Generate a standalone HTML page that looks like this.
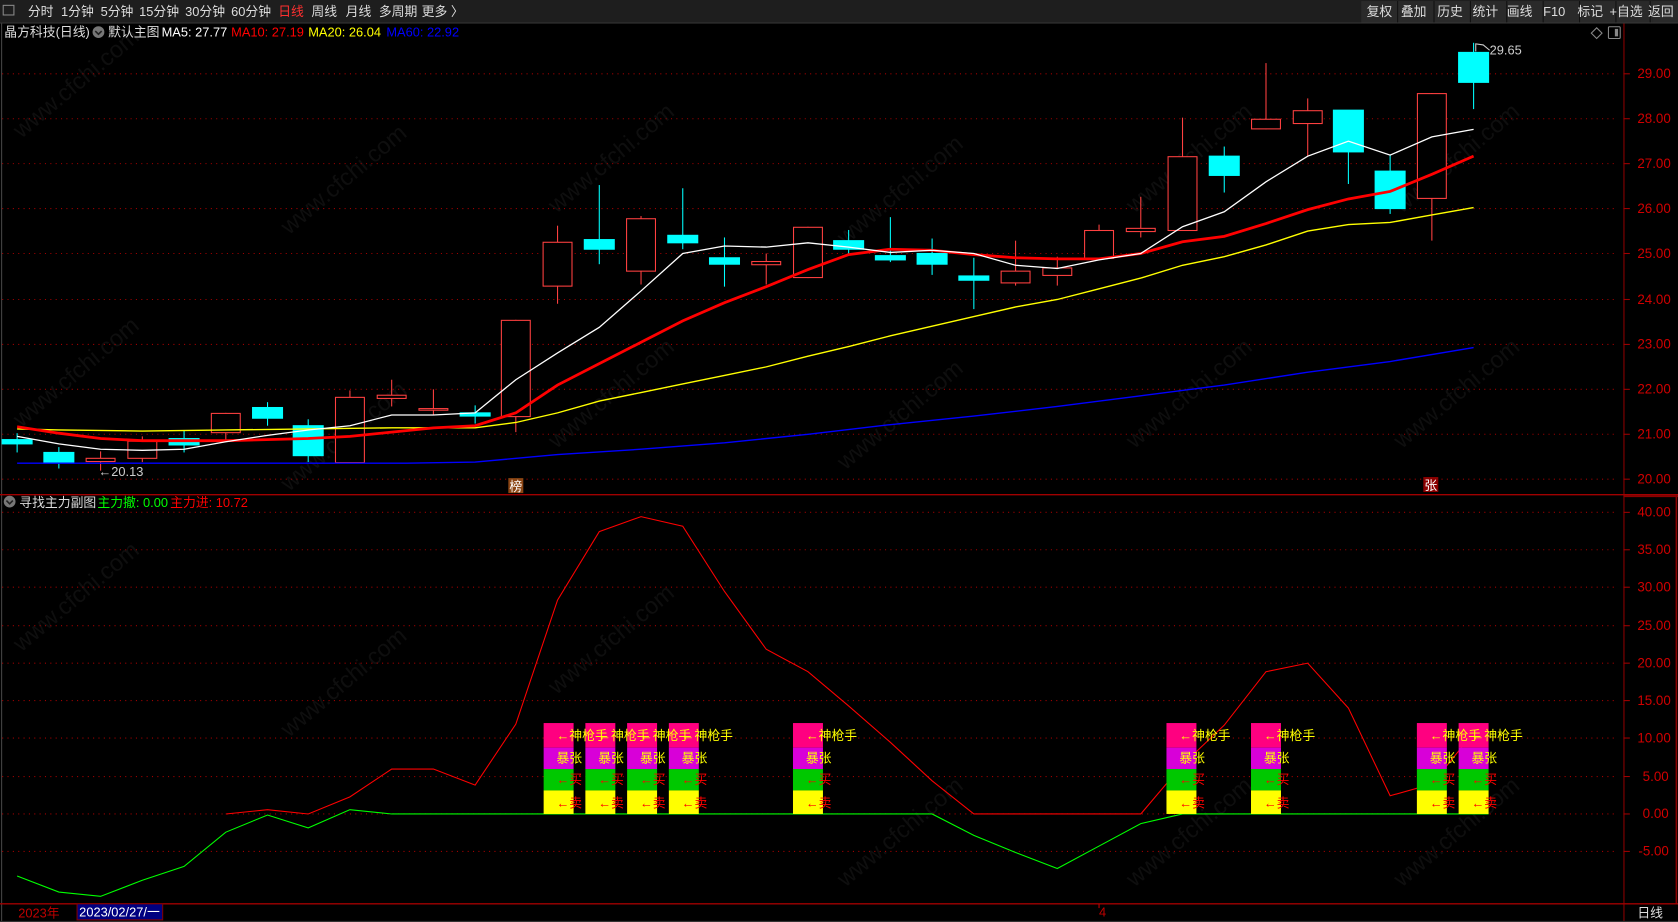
<!DOCTYPE html>
<html><head><meta charset="utf-8"><style>
html,body{margin:0;padding:0;background:#000;width:1678px;height:922px;overflow:hidden}
svg{display:block}
text{font-family:"Liberation Sans","Noto Sans CJK SC",sans-serif}
</style></head><body>
<svg width="1678" height="922" viewBox="0 0 1568 862" preserveAspectRatio="none" xmlns="http://www.w3.org/2000/svg">
<rect width="1568" height="862" fill="#000"/>
<rect x="0" y="0" width="1568" height="21" fill="#1e1e1e"/>
<line x1="0" y1="21.5" x2="1568" y2="21.5" stroke="#3a3a3a"/>
<rect x="3" y="5" width="10" height="9" fill="none" stroke="#888"/>
<g font-size="12" fill="#ddd">
<text x="26" y="15">分时</text><text x="57" y="15">1分钟</text><text x="94" y="15">5分钟</text><text x="130" y="15">15分钟</text><text x="173" y="15">30分钟</text><text x="216" y="15">60分钟</text>
<text x="260" y="15" fill="#ff3030">日线</text><text x="291" y="15">周线</text><text x="323" y="15">月线</text><text x="354" y="15">多周期</text><text x="394" y="15">更多 〉</text>
</g>
<g fill="#2a2a2a"><rect x="1272" y="1" width="34" height="20"/><rect x="1306" y="1" width="34" height="20"/><rect x="1340" y="1" width="34" height="20"/><rect x="1374" y="1" width="34" height="20"/><rect x="1408" y="1" width="34" height="20"/><rect x="1442" y="1" width="34" height="20"/><rect x="1476" y="1" width="34" height="20"/><rect x="1510" y="1" width="34" height="20"/><rect x="1544" y="1" width="24" height="20"/></g>
<g stroke="#111"><line x1="1306" y1="1" x2="1306" y2="21"/><line x1="1340" y1="1" x2="1340" y2="21"/><line x1="1374" y1="1" x2="1374" y2="21"/><line x1="1408" y1="1" x2="1408" y2="21"/><line x1="1442" y1="1" x2="1442" y2="21"/><line x1="1476" y1="1" x2="1476" y2="21"/><line x1="1510" y1="1" x2="1510" y2="21"/><line x1="1542" y1="1" x2="1542" y2="21"/></g>
<g font-size="12" fill="#ddd"><text x="1277" y="15">复权</text><text x="1309" y="15">叠加</text><text x="1343" y="15">历史</text><text x="1376" y="15">统计</text><text x="1408" y="15">画线</text><text x="1442" y="15">F10</text><text x="1474" y="15">标记</text><text x="1504" y="15">+自选</text><text x="1540" y="15">返回</text></g>

<g font-size="22" fill="#333" opacity="0.28">
<text transform="translate(20,130) rotate(-40)">www.cfchi.com</text>
<text transform="translate(270,220) rotate(-40)">www.cfchi.com</text>
<text transform="translate(520,200) rotate(-40)">www.cfchi.com</text>
<text transform="translate(790,230) rotate(-40)">www.cfchi.com</text>
<text transform="translate(1060,200) rotate(-40)">www.cfchi.com</text>
<text transform="translate(1310,200) rotate(-40)">www.cfchi.com</text>
<text transform="translate(20,400) rotate(-40)">www.cfchi.com</text>
<text transform="translate(270,460) rotate(-40)">www.cfchi.com</text>
<text transform="translate(520,420) rotate(-40)">www.cfchi.com</text>
<text transform="translate(790,440) rotate(-40)">www.cfchi.com</text>
<text transform="translate(1060,420) rotate(-40)">www.cfchi.com</text>
<text transform="translate(1310,420) rotate(-40)">www.cfchi.com</text>
<text transform="translate(20,610) rotate(-40)">www.cfchi.com</text>
<text transform="translate(270,690) rotate(-40)">www.cfchi.com</text>
<text transform="translate(520,650) rotate(-40)">www.cfchi.com</text>
<text transform="translate(790,830) rotate(-40)">www.cfchi.com</text>
<text transform="translate(1060,830) rotate(-40)">www.cfchi.com</text>
<text transform="translate(1310,830) rotate(-40)">www.cfchi.com</text>
</g>

<line x1="1.5" y1="22" x2="1.5" y2="862" stroke="#444"/>
<line x1="1517.5" y1="22" x2="1517.5" y2="862" stroke="#8b0000"/>
<line x1="1566.5" y1="463" x2="1566.5" y2="845" stroke="#8b0000" stroke-width="1.5"/>
<line x1="0" y1="462.5" x2="1568" y2="462.5" stroke="#a00000" stroke-width="1.3"/>
<line x1="0" y1="845" x2="1568" y2="845" stroke="#a00000" stroke-width="1.3"/>
<line x1="1517" y1="464" x2="1568" y2="464" stroke="#8b0000" stroke-width="1.5"/>

<g stroke="#a00000" stroke-dasharray="1 4">
<line x1="2" y1="69" x2="1510" y2="69"/><line x1="2" y1="111" x2="1510" y2="111"/><line x1="2" y1="153" x2="1510" y2="153"/><line x1="2" y1="195" x2="1510" y2="195"/><line x1="2" y1="237" x2="1510" y2="237"/><line x1="2" y1="280" x2="1510" y2="280"/><line x1="2" y1="322" x2="1510" y2="322"/><line x1="2" y1="364" x2="1510" y2="364"/><line x1="2" y1="406" x2="1510" y2="406"/><line x1="2" y1="448" x2="1510" y2="448"/>
<line x1="2" y1="479" x2="1510" y2="479"/><line x1="2" y1="514" x2="1510" y2="514"/><line x1="2" y1="549" x2="1510" y2="549"/><line x1="2" y1="585" x2="1510" y2="585"/><line x1="2" y1="620" x2="1510" y2="620"/><line x1="2" y1="655" x2="1510" y2="655"/><line x1="2" y1="690" x2="1510" y2="690"/><line x1="2" y1="726" x2="1510" y2="726"/><line x1="2" y1="761" x2="1510" y2="761"/><line x1="2" y1="796" x2="1510" y2="796"/>
</g>
<g font-size="12.5" fill="#d00000">
<text x="1530" y="73">29.00</text><text x="1530" y="115">28.00</text><text x="1530" y="157">27.00</text><text x="1530" y="199">26.00</text><text x="1530" y="241">25.00</text><text x="1530" y="284">24.00</text><text x="1530" y="326">23.00</text><text x="1530" y="368">22.00</text><text x="1530" y="410">21.00</text><text x="1530" y="452">20.00</text>
<text x="1530" y="483">40.00</text><text x="1530" y="518">35.00</text><text x="1530" y="553">30.00</text><text x="1530" y="589">25.00</text><text x="1530" y="624">20.00</text><text x="1530" y="659">15.00</text><text x="1530" y="694">10.00</text><text x="1535" y="730">5.00</text><text x="1535" y="765">0.00</text><text x="1531" y="800">-5.00</text>
</g>
<g stroke="#a00000"><line x1="1517" y1="69" x2="1523" y2="69"/><line x1="1517" y1="111" x2="1523" y2="111"/><line x1="1517" y1="153" x2="1523" y2="153"/><line x1="1517" y1="195" x2="1523" y2="195"/><line x1="1517" y1="237" x2="1523" y2="237"/><line x1="1517" y1="280" x2="1523" y2="280"/><line x1="1517" y1="322" x2="1523" y2="322"/><line x1="1517" y1="364" x2="1523" y2="364"/><line x1="1517" y1="406" x2="1523" y2="406"/><line x1="1517" y1="448" x2="1523" y2="448"/>
<line x1="1517" y1="479" x2="1523" y2="479"/><line x1="1517" y1="514" x2="1523" y2="514"/><line x1="1517" y1="549" x2="1523" y2="549"/><line x1="1517" y1="585" x2="1523" y2="585"/><line x1="1517" y1="620" x2="1523" y2="620"/><line x1="1517" y1="655" x2="1523" y2="655"/><line x1="1517" y1="690" x2="1523" y2="690"/><line x1="1517" y1="726" x2="1523" y2="726"/><line x1="1517" y1="761" x2="1523" y2="761"/><line x1="1517" y1="796" x2="1523" y2="796"/></g>

<g font-size="12">
<text x="4" y="34" fill="#ddd">晶方科技(日线)</text>
<circle cx="92" cy="30" r="5.5" fill="#777"/><path d="M89 29 L92 32 L95 29" stroke="#222" stroke-width="1.5" fill="none"/>
<text x="101" y="34" fill="#ddd">默认主图</text>
<text x="151" y="34" fill="#fff">MA5: 27.77</text>
<text x="216" y="34" fill="#ff0000">MA10: 27.19</text>
<text x="288" y="34" fill="#ffff00">MA20: 26.04</text>
<text x="361" y="34" fill="#0000ff">MA60: 22.92</text>
</g>
<path d="M1492 26 L1497 31 L1492 36 L1487 31 Z" fill="none" stroke="#888"/>
<rect x="1503" y="25" width="11" height="11" rx="1" fill="none" stroke="#888"/><rect x="1509" y="27" width="3" height="7" fill="#888"/>

<g stroke="#00ffff" fill="#00ffff">
<line x1="16" y1="405" x2="16" y2="423"/><rect x="2" y="411" width="28" height="4"/>
<line x1="55" y1="418" x2="55" y2="438"/><rect x="41" y="423" width="28" height="10"/>
<line x1="172" y1="402" x2="172" y2="423"/><rect x="158" y="410" width="28" height="6"/>
<line x1="250" y1="376" x2="250" y2="398"/><rect x="236" y="381" width="28" height="10"/>
<line x1="288" y1="392" x2="288" y2="432"/><rect x="274" y="398" width="28" height="28"/>
<line x1="444" y1="379" x2="444" y2="396"/><rect x="430" y="386" width="28" height="3"/>
<line x1="560" y1="173" x2="560" y2="247"/><rect x="546" y="224" width="28" height="9"/>
<line x1="638" y1="176" x2="638" y2="233"/><rect x="624" y="220" width="28" height="7"/>
<line x1="677" y1="222" x2="677" y2="268"/><rect x="663" y="241" width="28" height="6"/>
<line x1="793" y1="215" x2="793" y2="237"/><rect x="779" y="225" width="28" height="8"/>
<line x1="832" y1="203" x2="832" y2="245"/><rect x="818" y="239" width="28" height="4"/>
<line x1="871" y1="223" x2="871" y2="257"/><rect x="857" y="237" width="28" height="10"/>
<line x1="910" y1="241" x2="910" y2="289"/><rect x="896" y="258" width="28" height="4"/>
<line x1="1144" y1="137" x2="1144" y2="180"/><rect x="1130" y="146" width="28" height="18"/>
<line x1="1260" y1="103" x2="1260" y2="172"/><rect x="1246" y="103" width="28" height="39"/>
<line x1="1299" y1="145" x2="1299" y2="200"/><rect x="1285" y="160" width="28" height="35"/>
<line x1="1377" y1="40" x2="1377" y2="102"/><rect x="1363" y="49" width="28" height="28"/>
</g>
<g stroke="#ff4040" fill="none">
<line x1="94" y1="422" x2="94" y2="440"/><rect x="80.5" y="428.5" width="27" height="3" fill="#000"/>
<line x1="133" y1="408" x2="133" y2="432"/><rect x="119.5" y="412.5" width="27" height="16" fill="#000"/>
<line x1="211" y1="386" x2="211" y2="413"/><rect x="197.5" y="386.5" width="27" height="18" fill="#000"/>
<line x1="366" y1="355" x2="366" y2="380"/><rect x="352.5" y="369.5" width="27" height="3" fill="#000"/>
<line x1="405" y1="364" x2="405" y2="388"/><rect x="391.5" y="382" width="27" height="1.5" fill="#000"/>
<line x1="482" y1="299" x2="482" y2="404"/><rect x="468.5" y="299.5" width="27" height="90" fill="#000"/>
<line x1="521" y1="211" x2="521" y2="284"/><rect x="507.5" y="226.5" width="27" height="41" fill="#000"/>
<line x1="599" y1="202" x2="599" y2="266"/><rect x="585.5" y="204.5" width="27" height="49" fill="#000"/>
<line x1="716" y1="237" x2="716" y2="266"/><rect x="702.5" y="244.5" width="27" height="3" fill="#000"/>
<line x1="755" y1="212" x2="755" y2="260"/><rect x="741.5" y="212.5" width="27" height="47" fill="#000"/>
<line x1="949" y1="225" x2="949" y2="267"/><rect x="935.5" y="253.5" width="27" height="11" fill="#000"/>
<line x1="988" y1="240" x2="988" y2="267"/><rect x="974.5" y="250.5" width="27" height="7" fill="#000"/>
<line x1="1027" y1="210" x2="1027" y2="241"/><rect x="1013.5" y="215.5" width="27" height="26" fill="#000"/>
<line x1="1066" y1="184" x2="1066" y2="222"/><rect x="1052.5" y="213.5" width="27" height="3" fill="#000"/>
<line x1="1105" y1="110" x2="1105" y2="215"/><rect x="1091.5" y="146.5" width="27" height="69" fill="#000"/>
<line x1="1183" y1="59" x2="1183" y2="121"/><rect x="1169.5" y="111.5" width="27" height="9" fill="#000"/>
<line x1="1222" y1="92" x2="1222" y2="146"/><rect x="1208.5" y="103.5" width="27" height="12" fill="#000"/>
<line x1="1338" y1="87" x2="1338" y2="225"/><rect x="1324.5" y="87.5" width="27" height="98" fill="#000"/>
<line x1="327" y1="365" x2="327" y2="432"/><rect x="313.5" y="371.5" width="27" height="61" fill="#000"/>
</g>
<polyline fill="none" stroke="#0000ff" stroke-width="1.3" points="16,433 200,433 380,433 444,432 521,425 599,420 677,414 755,406 832,397 910,389 988,380 1066,370 1144,360 1222,348 1299,338 1377,325"/>
<polyline fill="none" stroke="#ffff00" stroke-width="1.3" points="16,401 55,402 133,403 211,402 288,401 366,400 444,400 482,395 521,386 560,375 599,367 638,359 677,351 716,343 755,333 793,324 832,314 871,305 910,296 949,287 988,280 1027,270 1066,260 1105,248 1144,240 1183,229 1222,216 1260,210 1299,208 1338,201 1377,194"/>
<polyline fill="none" stroke="#ff0000" stroke-width="2.6" points="16,399 55,405 94,410 133,412 211,412 288,410 327,408 366,404 405,400 444,398 482,386 521,360 560,340 599,320 638,300 677,283 716,268 755,252 793,238 832,233 871,234 910,238 949,241 988,242 1027,242 1066,237 1105,226 1144,221 1183,209 1222,196 1260,186 1299,179 1338,163 1377,146"/>
<polyline fill="none" stroke="#ffffff" stroke-width="1.2" points="16,408 55,415 94,420 133,421 172,420 211,413 250,407 288,402 327,398 366,388 405,388 444,386 482,355 521,330 560,306 599,272 638,237 677,230 716,231 755,227 793,231 832,236 871,234 910,237 949,248 988,251 1027,243 1066,237 1105,212 1144,198 1183,170 1222,146 1260,132 1299,145 1338,128 1377,121"/>
<text x="92" y="445" font-size="12" fill="#ccc">←20.13</text>
<path d="M1379 48 L1379 41 L1386 42 L1392 47" stroke="#ccc" fill="none"/>
<text x="1392" y="51" font-size="12" fill="#ccc">29.65</text>
<rect x="475" y="447" width="14" height="14" fill="#8b4513"/><text x="476" y="459" font-size="12" fill="#fff">榜</text>
<rect x="1330" y="446" width="14" height="14" fill="#8b0000"/><text x="1331" y="458" font-size="12" fill="#fff">张</text>

<circle cx="9" cy="469" r="5.5" fill="#777"/><path d="M6 468 L9 471 L12 468" stroke="#222" stroke-width="1.5" fill="none"/>
<g font-size="12"><text x="18" y="474" fill="#ddd">寻找主力副图</text><text x="91" y="474" fill="#00ff00">主力撤: 0.00</text><text x="159" y="474" fill="#ff0000">主力进: 10.72</text></g>

<polyline fill="none" stroke="#ff0000" stroke-width="1" points="211,761 250,757 288,761 327,745 366,719 405,719 444,734 482,677 521,561 560,497 599,483 638,492 677,553 716,607 755,628 793,660 832,694 871,730 910,761 1066,761 1105,715 1144,678 1183,628 1222,620 1260,662 1299,744 1338,733 1377,685"/>
<polyline fill="none" stroke="#00ff00" stroke-width="1" points="16,819 55,834 94,838 133,823 172,810 211,778 250,762 288,774 327,757 366,761 871,761 910,781 949,797 988,812 1027,791 1066,770 1105,761 1391,761"/>

<g>
<g transform="translate(508,0)"><rect y="676" width="28" height="23" fill="#ff0080"/><rect y="699" width="28" height="20" fill="#d800d8"/><rect y="719" width="28" height="20" fill="#00c800"/><rect y="739" width="28" height="22" fill="#ffff00"/></g>
<g transform="translate(547,0)"><rect y="676" width="28" height="23" fill="#ff0080"/><rect y="699" width="28" height="20" fill="#d800d8"/><rect y="719" width="28" height="20" fill="#00c800"/><rect y="739" width="28" height="22" fill="#ffff00"/></g>
<g transform="translate(586,0)"><rect y="676" width="28" height="23" fill="#ff0080"/><rect y="699" width="28" height="20" fill="#d800d8"/><rect y="719" width="28" height="20" fill="#00c800"/><rect y="739" width="28" height="22" fill="#ffff00"/></g>
<g transform="translate(625,0)"><rect y="676" width="28" height="23" fill="#ff0080"/><rect y="699" width="28" height="20" fill="#d800d8"/><rect y="719" width="28" height="20" fill="#00c800"/><rect y="739" width="28" height="22" fill="#ffff00"/></g>
<g transform="translate(741,0)"><rect y="676" width="28" height="23" fill="#ff0080"/><rect y="699" width="28" height="20" fill="#d800d8"/><rect y="719" width="28" height="20" fill="#00c800"/><rect y="739" width="28" height="22" fill="#ffff00"/></g>
<g transform="translate(1090,0)"><rect y="676" width="28" height="23" fill="#ff0080"/><rect y="699" width="28" height="20" fill="#d800d8"/><rect y="719" width="28" height="20" fill="#00c800"/><rect y="739" width="28" height="22" fill="#ffff00"/></g>
<g transform="translate(1169,0)"><rect y="676" width="28" height="23" fill="#ff0080"/><rect y="699" width="28" height="20" fill="#d800d8"/><rect y="719" width="28" height="20" fill="#00c800"/><rect y="739" width="28" height="22" fill="#ffff00"/></g>
<g transform="translate(1324,0)"><rect y="676" width="28" height="23" fill="#ff0080"/><rect y="699" width="28" height="20" fill="#d800d8"/><rect y="719" width="28" height="20" fill="#00c800"/><rect y="739" width="28" height="22" fill="#ffff00"/></g>
<g transform="translate(1363,0)"><rect y="676" width="28" height="23" fill="#ff0080"/><rect y="699" width="28" height="20" fill="#d800d8"/><rect y="719" width="28" height="20" fill="#00c800"/><rect y="739" width="28" height="22" fill="#ffff00"/></g>
</g>
<g font-size="12">
<g fill="#ffff00"><text x="520" y="692">←神枪手</text><text x="559" y="692">←神枪手</text><text x="598" y="692">←神枪手</text><text x="637" y="692">←神枪手</text><text x="753" y="692">←神枪手</text><text x="1102" y="692">←神枪手</text><text x="1181" y="692">←神枪手</text><text x="1336" y="692">←神枪手</text><text x="1375" y="692">←神枪手</text>
<text x="520" y="713">暴张</text><text x="559" y="713">暴张</text><text x="598" y="713">暴张</text><text x="637" y="713">暴张</text><text x="753" y="713">暴张</text><text x="1102" y="713">暴张</text><text x="1181" y="713">暴张</text><text x="1336" y="713">暴张</text><text x="1375" y="713">暴张</text></g>
<g fill="#ff0000"><text x="520" y="733">←买</text><text x="559" y="733">←买</text><text x="598" y="733">←买</text><text x="637" y="733">←买</text><text x="753" y="733">←买</text><text x="1102" y="733">←买</text><text x="1181" y="733">←买</text><text x="1336" y="733">←买</text><text x="1375" y="733">←买</text>
<text x="520" y="755">←卖</text><text x="559" y="755">←卖</text><text x="598" y="755">←卖</text><text x="637" y="755">←卖</text><text x="753" y="755">←卖</text><text x="1102" y="755">←卖</text><text x="1181" y="755">←卖</text><text x="1336" y="755">←卖</text><text x="1375" y="755">←卖</text></g>
</g>

<text x="17" y="858" font-size="12" fill="#c00000">2023年</text>
<rect x="72" y="845" width="80" height="15" fill="#000080" stroke="#800000"/>
<text x="74" y="857" font-size="12" fill="#fff">2023/02/27/一</text>
<text x="1027" y="857" font-size="12" fill="#c00000">4</text>
<line x1="1027" y1="845" x2="1027" y2="849" stroke="#c00000"/>
<text x="1530" y="858" font-size="12" fill="#ddd">日线</text>
<line x1="0" y1="861.5" x2="1568" y2="861.5" stroke="#333"/>
</svg>
</body></html>
